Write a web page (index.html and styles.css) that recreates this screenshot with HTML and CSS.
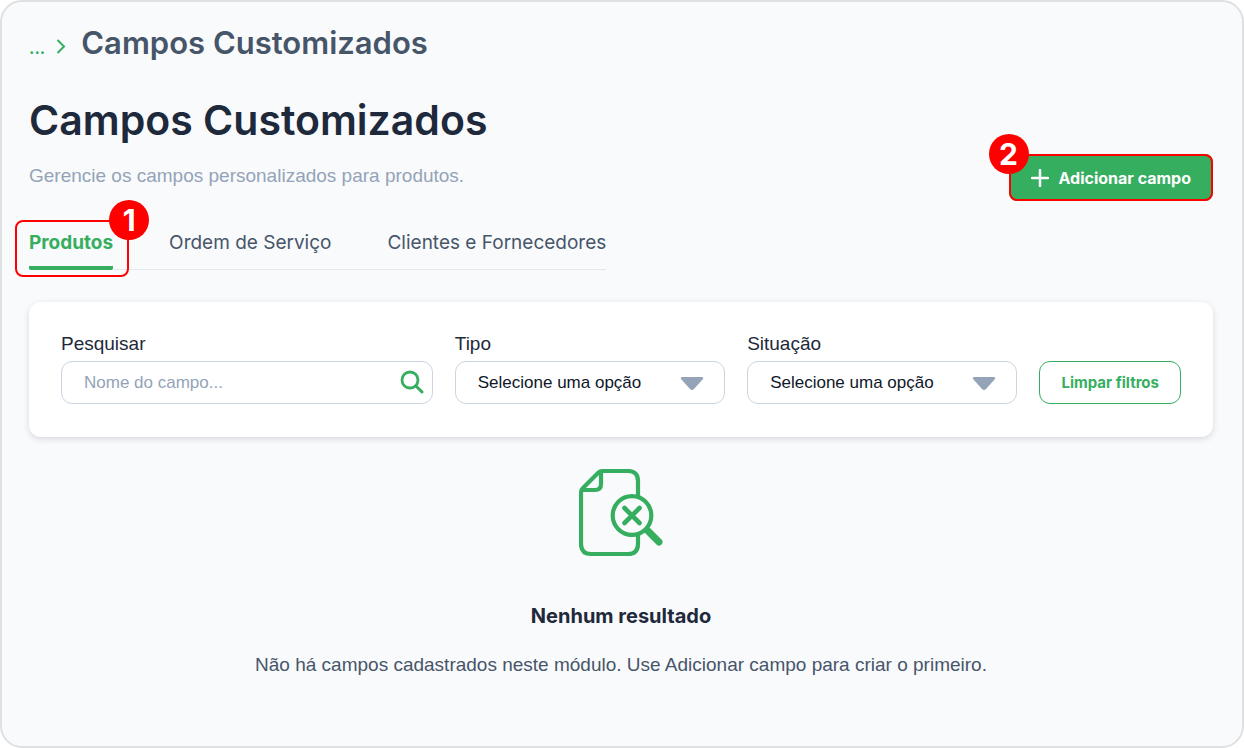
FILE: index.html
```html
<!DOCTYPE html>
<html lang="pt-BR">
<head>
    <meta charset="UTF-8">
    <meta name="viewport" content="width=device-width, initial-scale=1.0">
    <title>Campos Customizados</title>
    <link rel="stylesheet" href="styles.css">
</head>
<body>
    <main class="page">
        <nav class="breadcrumb">
            <a href="#" class="breadcrumb-link">...</a>
            <svg class="breadcrumb-arrow" viewBox="0 0 10 16">
                <path d="M1.5 2 8 8.5 1.5 15" fill="none" stroke="currentColor" stroke-width="2"/>
            </svg>
            <span class="breadcrumb-current">Campos Customizados</span>
        </nav>

        <header class="header">
            <div>
                <h1 class="title">Campos Customizados</h1>
                <p class="subtitle">Gerencie os campos personalizados para produtos.</p>
            </div>
            <div class="marked">
                <button type="button" class="btn-primary">
                    <svg class="plus-icon" viewBox="0 0 18 18">
                        <path d="M9 1v16M1 9h16" stroke="currentColor" stroke-width="2.5" stroke-linecap="round"/>
                    </svg>
                    Adicionar campo
                </button>
                <span class="mark mark-button"></span>
                <span class="step step-button">2</span>
            </div>
        </header>

        <ul class="tabs">
            <li class="marked">
                <a href="#" class="tab active">Produtos</a>
                <span class="mark mark-tab"></span>
                <span class="step step-tab">1</span>
            </li>
            <li><a href="#" class="tab">Ordem de Serviço</a></li>
            <li><a href="#" class="tab">Clientes e Fornecedores</a></li>
        </ul>

        <form class="filters">
            <div class="field">
                <label for="pesquisar">Pesquisar</label>
                <div class="control">
                    <input type="text" id="pesquisar" placeholder="Nome do campo...">
                    <svg class="search-icon" viewBox="0 0 24 24">
                        <circle cx="10" cy="10" r="8" fill="none" stroke="currentColor" stroke-width="2.8"/>
                        <path d="m16 16 6 6" stroke="currentColor" stroke-width="3" stroke-linecap="round"/>
                    </svg>
                </div>
            </div>
            <div class="field">
                <label for="tipo">Tipo</label>
                <div class="control">
                    <select id="tipo">
                        <option>Selecione uma opção</option>
                    </select>
                    <svg class="caret-icon" viewBox="0 0 24 14">
                        <path d="M2 0h20q2 .3 1 2l-9 10q-2 2-4 0L1 2Q0 .3 2 0z" fill="currentColor"/>
                    </svg>
                </div>
            </div>
            <div class="field">
                <label for="situacao">Situação</label>
                <div class="control">
                    <select id="situacao">
                        <option>Selecione uma opção</option>
                    </select>
                    <svg class="caret-icon" viewBox="0 0 24 14">
                        <path d="M2 0h20q2 .3 1 2l-9 10q-2 2-4 0L1 2Q0 .3 2 0z" fill="currentColor"/>
                    </svg>
                </div>
            </div>
            <button type="reset" class="btn-outline">Limpar filtros</button>
        </form>

        <section class="empty">
            <svg class="empty-icon" viewBox="0 0 84 88">
                <g fill="none" stroke="currentColor" stroke-width="4.2" stroke-linejoin="round">
                    <path d="M59 28V12Q59 2 49 2H24Q21 2 19 4L4 19Q2 21 2 24V75Q2 85 12 85H49Q59 85 59 75V65"/>
                    <path d="M22 3V15Q22 21 16 21H3"/>
                    <circle cx="53" cy="46.5" r="19.3"/>
                    <path d="m45.5 39 15 15m0-15-15 15" stroke-width="4.6" stroke-linecap="round"/>
                    <path d="m69 62 11 11" stroke-width="7" stroke-linecap="round"/>
                </g>
            </svg>
            <h2 class="empty-title">Nenhum resultado</h2>
            <p class="empty-text">Não há campos cadastrados neste módulo. Use Adicionar campo para criar o primeiro.</p>
        </section>
    </main>
</body>
</html>
```

FILE: styles.css
```css
* {
    margin: 0;
    padding: 0;
    box-sizing: border-box;
}

body {
    font-family: 'Liberation Sans', Arial, sans-serif;
    background: #fff;
    color: #1e293b;
}

a {
    text-decoration: none;
}

.page {
    min-height: 100vh;
    padding: 21px 29px 22px 27px;
    background: #f9fafc;
    border: 2px solid #dfe0e1;
    border-radius: 22px;
}

.breadcrumb {
    display: flex;
    align-items: baseline;
    font-family: Inter, sans-serif;
    line-height: 40px;
}

.breadcrumb-link {
    color: #36ae60;
    font-size: 17px;
    font-weight: 600;
}

.breadcrumb-arrow {
    width: 10px;
    height: 16px;
    margin: 0 15px 0 11px;
    align-self: center;
    color: #36ae60;
}

.breadcrumb-current {
    color: #475569;
    font-size: 31px;
    font-weight: 600;
}

.header {
    display: flex;
    justify-content: space-between;
    align-items: flex-end;
    padding-top: 26px;
}

.title {
    font-family: Inter, sans-serif;
    font-size: 41px;
    font-weight: 600;
    line-height: 52px;
}

.subtitle {
    padding: 18px 0 13px;
    color: #94a3b8;
    font-size: 19px;
    line-height: 24px;
}

.marked {
    position: relative;
}

.mark {
    position: absolute;
    border: 2px solid #f00;
    border-radius: 8px;
    pointer-events: none;
}

.mark-button {
    inset: 0;
}

.mark-tab {
    inset: -8px -16px -8px -14px;
}

.step {
    position: absolute;
    width: 40px;
    height: 40px;
    border-radius: 50%;
    background: #f00;
    color: #fff;
    font-family: Inter, sans-serif;
    font-size: 30px;
    font-weight: 700;
    line-height: 40px;
    text-align: center;
}

.step-button {
    top: -20px;
    left: -20px;
}

.step-tab {
    top: -28px;
    right: -36px;
}

.btn-primary {
    display: flex;
    align-items: center;
    gap: 10px;
    height: 47px;
    padding: 0 22px;
    border: none;
    border-radius: 8px;
    background: #36ae60;
    color: #fff;
    font-family: Inter, sans-serif;
    font-size: 16px;
    font-weight: 700;
    cursor: pointer;
}

.plus-icon {
    width: 18px;
    height: 18px;
}

.tabs {
    display: flex;
    gap: 56px;
    width: fit-content;
    margin-top: 27px;
    border-bottom: 1px solid #e2e8f0;
    list-style: none;
}

.tab {
    display: block;
    height: 40px;
    color: #475569;
    font-family: Inter, sans-serif;
    font-size: 19px;
    line-height: 30px;
}

.tab.active {
    height: 42px;
    margin-bottom: -1px;
    border-bottom: 4px solid #36ae60;
    border-radius: 2px;
    color: #36ae60;
    font-weight: 700;
}

.filters {
    display: grid;
    grid-template-columns: 11fr 8fr 8fr auto;
    gap: 22px;
    align-items: end;
    margin-top: 32px;
    padding: 30px 32px 33px;
    border-radius: 12px;
    background: #fff;
    box-shadow: 0 2px 6px rgba(30, 41, 59, 0.16);
}

.field label {
    display: block;
    font-size: 19px;
    line-height: 24px;
    margin-bottom: 5px;
}

.control {
    position: relative;
}

.control input,
.control select {
    display: block;
    width: 100%;
    height: 43px;
    padding: 0 22px;
    border: 1px solid #cbd5e1;
    border-radius: 11px;
    background: #fff;
    color: #0f172a;
    font-family: inherit;
    font-size: 17px;
    appearance: none;
}

.control input::placeholder {
    color: #94a3b8;
}

.search-icon {
    position: absolute;
    top: 9px;
    right: 9px;
    width: 24px;
    height: 24px;
    color: #36ae60;
}

.caret-icon {
    position: absolute;
    top: 16px;
    right: 21px;
    width: 24px;
    height: 14px;
    color: #94a3b8;
    pointer-events: none;
}

.btn-outline {
    height: 43px;
    padding: 0 21px;
    border: 1px solid #36ae60;
    border-radius: 11px;
    background: #fff;
    color: #36ae60;
    font-family: Inter, sans-serif;
    font-size: 15px;
    font-weight: 700;
    cursor: pointer;
}

.empty {
    display: flex;
    flex-direction: column;
    align-items: center;
    padding-top: 32px;
    text-align: center;
}

.empty-icon {
    width: 84px;
    height: 88px;
    color: #36ae60;
}

.empty-title {
    margin-top: 44px;
    font-family: Inter, sans-serif;
    font-size: 20px;
    font-weight: 700;
    line-height: 30px;
}

.empty-text {
    margin-top: 22px;
    color: #475569;
    font-size: 19px;
    line-height: 24px;
}
```
